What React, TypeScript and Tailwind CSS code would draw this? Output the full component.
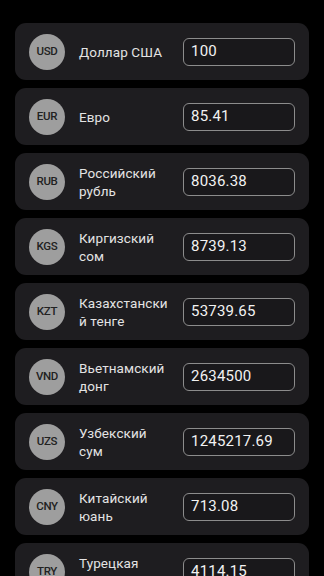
import React from "react";

const rows = [
  { code: "USD", name: "Доллар США", value: "100" },
  { code: "EUR", name: "Евро", value: "85.41" },
  { code: "RUB", name: "Российский рубль", value: "8036.38" },
  { code: "KGS", name: "Киргизский сом", value: "8739.13" },
  { code: "KZT", name: "Казахстанский тенге", value: "53739.65" },
  { code: "VND", name: "Вьетнамский донг", value: "2634500" },
  { code: "UZS", name: "Узбекский сум", value: "1245217.69" },
  { code: "CNY", name: "Китайский юань", value: "713.08" },
  { code: "TRY", name: "Турецкая лира", value: "4114.15" },
];

export default function App() {
  return (
    <div
      className="min-h-screen bg-black px-[15px] pt-[23px] pb-4 flex flex-col gap-[8px]"
      style={{ fontFamily: "Roboto, 'Noto Sans', sans-serif" }}
    >
      {rows.map((r) => (
        <div
          key={r.code}
          className="h-[57px] shrink-0 rounded-[11px] bg-[#1e1d20] flex items-center pl-[14px] pr-[14px]"
        >
          <div className="w-[36px] h-[36px] rounded-full bg-[#9e9e9e] flex items-center justify-center shrink-0">
            <span className="text-[11.5px] font-medium text-[#222] tracking-[-0.3px]">{r.code}</span>
          </div>
          <div className="ml-[14px] w-[90px] text-[13.5px] leading-[18px] text-[#e3e3e3] tracking-[0.1px] break-words">
            {r.name}
          </div>
          <div className="ml-auto w-[112px] h-[28px] rounded-[6px] border border-[#8c8c8c] bg-[#19181b] flex items-center pl-[7px]">
            <span className="text-[15px] text-[#f2f2f2] tracking-[0.2px]">{r.value}</span>
          </div>
        </div>
      ))}
    </div>
  );
}
